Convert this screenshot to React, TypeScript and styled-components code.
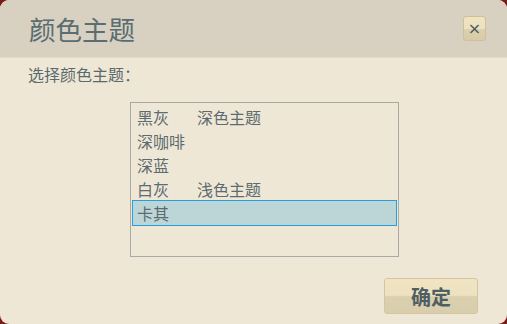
import styled, {createGlobalStyle} from 'styled-components'

const GlobalStyle = createGlobalStyle`
    html, body {
        margin: 0;
        padding: 0;
        background: #7a1c1c;
    }
    body {
        font-family: "Noto Sans CJK SC", "Noto Sans", sans-serif;
    }
`;

const themes = [
    {name: '黑灰', note: '深色主题'},
    {name: '深咖啡', note: ''},
    {name: '深蓝', note: ''},
    {name: '白灰', note: '浅色主题'},
    {name: '卡其', note: ''},
]

const Dialog = styled.div`
    width: 507px;
    height: 324px;
    border-radius: 9px;
    overflow: hidden;
    background: #efe7d6;
    display: flex;
    flex-direction: column;
`;

const Header = styled.div`
    height: 58px;
    flex-shrink: 0;
    background: #d8d0c1;
    border-bottom: 1px solid #e6dcc6;
    box-sizing: border-box;
    display: flex;
    align-items: center;
    justify-content: space-between;
    padding: 0 21px 0 29px;
`;

const Title = styled.h1`
    margin: 0;
    font-size: 26.5px;
    font-weight: normal;
    color: #5a6d72;
`;

const CloseButton = styled.button`
    width: 23px;
    height: 25px;
    padding: 0;
    border: 1px solid #cfc197;
    border-radius: 3px;
    background: linear-gradient(#efe3c1 0%, #ede1bf 50%, #dbd1b0 51%, #d6cca9 100%);
    color: #4d5a60;
    font-size: 16px;
    line-height: 1;
    font-family: "DejaVu Sans", sans-serif;
    display: flex;
    align-items: center;
    justify-content: center;
    cursor: pointer;
`;

const Body = styled.div`
    flex: 1;
    display: flex;
    flex-direction: column;
    padding: 6px 0 0 28px;
`;

const Label = styled.div`
    font-size: 16px;
    color: #5b6a6e;
    line-height: 20px;
`;

const ListBox = styled.div`
    margin: 18px 0 0 102px;
    width: 269px;
    height: 155px;
    box-sizing: border-box;
    border: 1px solid #a9aaa6;
    padding: 2px 0 0;
    display: flex;
    flex-direction: column;
`;

const Option = styled.div<{$selected?: boolean}>`
    height: 24px;
    margin: 0 2px;
    padding-left: 4px;
    display: flex;
    align-items: center;
    font-size: 16px;
    color: #5c6b70;
    outline: ${p => p.$selected ? '1px solid #22a0df' : 'none'};
    background: ${p => p.$selected ? '#bcd6d8' : 'transparent'};
`;

const OptionName = styled.span`
    width: 60px;
`;

const Footer = styled.div`
    margin-top: auto;
    display: flex;
    justify-content: flex-end;
    padding: 0 29px 10px 0;
`;

const OkButton = styled.button`
    width: 94px;
    height: 36px;
    border: 1px solid #d3c69e;
    border-radius: 3px;
    background: linear-gradient(#f0e4c3 0%, #ede1bf 48%, #dad0b0 52%, #d8cead 100%);
    color: #4f5e63;
    font-family: "Noto Sans CJK SC", sans-serif;
    font-size: 20px;
    font-weight: bold;
    cursor: pointer;
`;

export default function App() {
    return (
        <>
            <GlobalStyle/>
            <Dialog>
                <Header>
                    <Title>颜色主题</Title>
                    <CloseButton>×</CloseButton>
                </Header>
                <Body>
                    <Label>选择颜色主题：</Label>
                    <ListBox>
                        {themes.map((t, i) =>
                            <Option key={t.name} $selected={i === 4}>
                                <OptionName>{t.name}</OptionName>
                                {t.note}
                            </Option>
                        )}
                    </ListBox>
                    <Footer>
                        <OkButton>确定</OkButton>
                    </Footer>
                </Body>
            </Dialog>
        </>
    )
}
